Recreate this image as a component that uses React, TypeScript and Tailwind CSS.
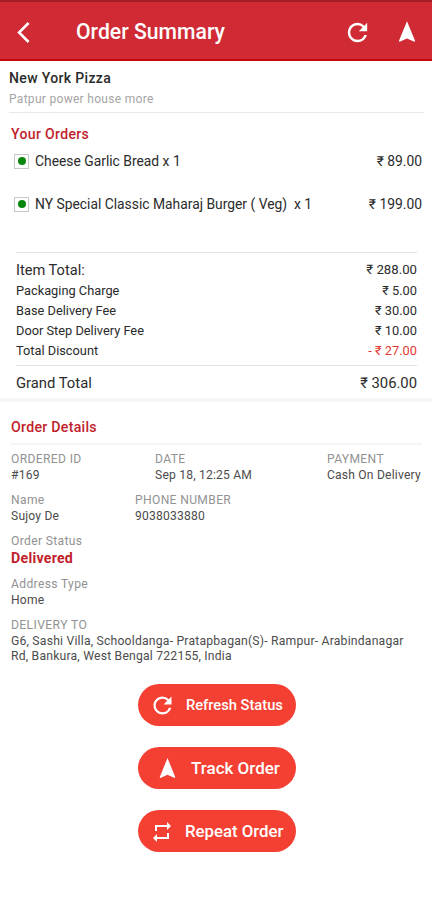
import React from 'react';
import { MdArrowBackIosNew, MdNavigation, MdRefresh, MdRepeat } from 'react-icons/md';

type OrderItem = {
  name: string;
  price: string;
};

type Charge = {
  label: string;
  amount: string;
  discount?: boolean;
};

const items: OrderItem[] = [
  { name: 'Cheese Garlic Bread x 1', price: '₹ 89.00' },
  { name: 'NY Special Classic Maharaj Burger ( Veg)  x 1', price: '₹ 199.00' },
];

const charges: Charge[] = [
  { label: 'Packaging Charge', amount: '₹ 5.00' },
  { label: 'Base Delivery Fee', amount: '₹ 30.00' },
  { label: 'Door Step Delivery Fee', amount: '₹ 10.00' },
  { label: 'Total Discount', amount: '- ₹ 27.00', discount: true },
];

const Header = () => (
  <header className="flex h-[61px] items-center border-t-2 border-b-2 border-t-[#a31d28] border-b-[#c4060c] bg-[#d02a34] pt-[3px] pr-[12px] pl-[11px] text-white">
    <MdArrowBackIosNew size={25} />
    <h1 className="ml-10 flex-1 text-[21.2px] font-medium">Order Summary</h1>
    <MdRefresh size={29} />
    <MdNavigation size={26} className="ml-[22px]" />
  </header>
);

const VegMark = () => (
  <span className="flex h-[15px] w-[15px] items-center justify-center border border-[#c3cbc3]">
    <span className="h-2 w-2 rounded-full bg-[#07870b]" />
  </span>
);

type FieldProps = {
  label: string;
  value: string;
  className?: string;
};

const Field = ({ label, value, className = '' }: FieldProps) => (
  <div className={`text-[12.1px] leading-4 ${className}`}>
    <p className="tracking-[0.35px] text-[#929292]">{label}</p>
    <p className="tracking-[0.2px] text-[#4c4c4c]">{value}</p>
  </div>
);

type ActionProps = {
  children: React.ReactNode;
  className: string;
};

const Action = ({ children, className }: ActionProps) => (
  <button
    className={`flex h-[42px] w-[158px] items-center rounded-full bg-[#f44033] pt-px font-medium whitespace-nowrap text-white ${className}`}
  >
    {children}
  </button>
);

const App = () => {
  return (
    <div className="h-[900px] w-[432px] overflow-hidden bg-white font-[Roboto,'Noto_Sans',sans-serif] text-[#2b2b2b]">
      <Header />

      <section className="mr-2 ml-[9px] h-[52px] border-b border-[#e9e9e9] pt-2">
        <h2 className="text-[14px] leading-[19px] font-medium tracking-[0.35px]">New York Pizza</h2>
        <p className="mt-px text-[12px] leading-5 tracking-[0.3px] text-[#a5a5a5]">Patpur power house more</p>
      </section>

      <section className="h-[139px] pt-[11px] pr-[10px] pl-[11px]">
        <h3 className="text-[14px] leading-5 font-medium tracking-[0.35px] text-[#c11e2b]">Your Orders</h3>
        {items.map((item) => (
          <div key={item.name} className="mb-[23px] flex h-5 items-center pl-[3px] text-[13.85px] first-of-type:mt-[7px]">
            <VegMark />
            <span className="ml-1.5 flex-1 whitespace-pre">{item.name}</span>
            <span>{item.price}</span>
          </div>
        ))}
      </section>

      <section className="mr-[15px] ml-4 border-t border-[#e2e2e2] pt-[7px] text-[12.8px] leading-5">
        <div className="flex h-[20.5px] justify-between">
          <span className="text-[14.6px]">Item Total:</span>
          <span className="text-[13.2px]">₹ 288.00</span>
        </div>
        {charges.map((charge) => (
          <div key={charge.label} className="flex h-5 justify-between">
            <span>{charge.label}</span>
            <span className={charge.discount ? 'text-[#e53935]' : ''}>{charge.amount}</span>
          </div>
        ))}
        <div className="mt-[4.5px] flex h-[33px] items-center justify-between border-t border-[#e2e2e2] pt-0.5 text-[14.8px]">
          <span>Grand Total</span>
          <span>₹ 306.00</span>
        </div>
      </section>
      <div className="h-1 bg-[#f7f7f7]" />

      <section className="pr-[10px] pl-[11px]">
        <h3 className="h-[43px] border-b-2 border-[#f5f5f5] pt-[15px] text-[14.2px] leading-5 font-medium tracking-[0.25px] text-[#c11e2b]">
          Order Details
        </h3>
        <div className="mt-[6px] flex">
          <Field label="ORDERED ID" value="#169" className="w-[144px]" />
          <Field label="DATE" value="Sep 18, 12:25 AM" className="w-[172px]" />
          <Field label="PAYMENT" value="Cash On Delivery" className="whitespace-nowrap" />
        </div>
        <div className="mt-[9px] flex">
          <Field label="Name" value="Sujoy De" className="w-[124px]" />
          <Field label="PHONE NUMBER" value="9038033880" />
        </div>
        <div className="mt-[9px] leading-[17px]">
          <p className="text-[12.1px] tracking-[0.35px] text-[#929292]">Order Status</p>
          <p className="text-[14.2px] font-bold tracking-[0.25px] text-[#c11e2b]">Delivered</p>
        </div>
        <Field label="Address Type" value="Home" className="mt-[9px]" />
        <div className="mt-[9px] text-[12.2px] leading-[15px] tracking-[0.2px]">
          <p className="leading-[17px] tracking-[0.35px] text-[#929292]">DELIVERY TO</p>
          <p className="whitespace-nowrap text-[#4c4c4c]">
            G6, Sashi Villa, Schooldanga- Pratapbagan(S)- Rampur- Arabindanagar
            <br />
            Rd, Bankura, West Bengal 722155, India
          </p>
        </div>
      </section>

      <div className="mt-[20px] ml-[138px] flex flex-col gap-[21px]">
        <Action className="pl-[11px] text-[14.7px]">
          <MdRefresh size={27} />
          <span className="ml-[10px]">Refresh Status</span>
        </Action>
        <Action className="pl-[17px] text-[17px]">
          <MdNavigation size={25} />
          <span className="ml-[11px]">Track Order</span>
        </Action>
        <Action className="pl-[12px] text-[16.8px]">
          <MdRepeat size={24} />
          <span className="ml-[11px]">Repeat Order</span>
        </Action>
      </div>
    </div>
  );
};

export default App;
